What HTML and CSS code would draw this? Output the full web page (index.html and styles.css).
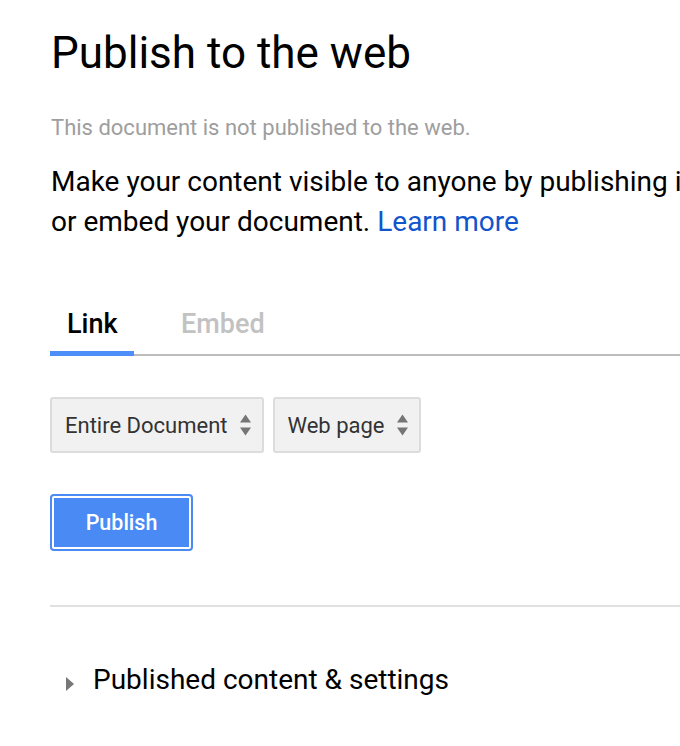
FILE: index.html
```html
<!DOCTYPE html>
<html>
<head>
<meta charset="utf-8">
<link rel="stylesheet" href="styles.css">
</head>
<body>
<div class="dialog">
  <h1 class="title">Publish to the web</h1>
  <p class="status">This document is not published to the web.</p>
  <p class="intro">Make your content visible to anyone by publishing it<br>or embed your document. <a class="link" href="#">Learn more</a></p>

  <div class="tabs">
    <div class="tab active">Link</div>
    <div class="tab">Embed</div>
  </div>

  <div class="selects">
    <div class="select">Entire Document <span class="arrows"><svg width="11" height="22" viewBox="0 0 11 22"><path d="M5.5 0.5 L11 8.5 H0 Z M0 13.5 H11 L5.5 21.5 Z" fill="#757575"/></svg></span></div>
    <div class="select">Web page <span class="arrows"><svg width="11" height="22" viewBox="0 0 11 22"><path d="M5.5 0.5 L11 8.5 H0 Z M0 13.5 H11 L5.5 21.5 Z" fill="#757575"/></svg></span></div>
  </div>

  <button class="publish">Publish</button>

  <div class="divider"></div>

  <div class="expander">
    <span class="caret"></span>
    <span class="expander-label">Published content &amp; settings</span>
  </div>
</div>
</body>
</html>
```

FILE: styles.css
```css
html, body {
  margin: 0;
  padding: 0;
  background: #fff;
  overflow: hidden;
}
body {
  font-family: Roboto, "Liberation Sans", Arial, sans-serif;
  color: #000;
}
.dialog {
  width: 700px;
  padding: 25px 0 0 50px;
}
.title {
  margin: 0;
  font-size: 44px;
  font-weight: 400;
  line-height: 56px;
  padding-left: 1px;
}
.status {
  margin: 35px 0 0 1px;
  font-size: 22px;
  color: #9e9e9e;
  line-height: 24px;
}
.intro {
  margin: 22px 0 0 1px;
  font-size: 28px;
  line-height: 40px;
  white-space: nowrap;
}
.link {
  color: #1155cc;
  text-decoration: none;
}
.tabs {
  display: flex;
  align-items: flex-start;
  margin-top: 66px;
  border-bottom: 2px solid #bdbdbd;
}
.tab {
  font-size: 27px;
  font-weight: 500;
  line-height: 32px;
  color: #c2c2c2;
  padding: 0 17px 16px;
  margin-bottom: -2px;
}
.tab.active {
  color: #000;
  width: 84px;
  box-sizing: border-box;
  padding-bottom: 11px;
  border-bottom: 5px solid #4d8ef8;
  margin-right: 30px;
}
.selects {
  display: flex;
  gap: 9px;
  margin-top: 41px;
}
.select {
  display: flex;
  align-items: center;
  height: 56px;
  box-sizing: border-box;
  padding: 0 11px 0 13px;
  background: #f1f1f1;
  border: 2px solid #dcdcdc;
  border-radius: 3px;
  font-size: 22px;
  color: #333;
}
.arrows {
  display: flex;
  margin-left: 12px;
}
.publish {
  display: block;
  margin: 43px 0 0 2px;
  width: 139px;
  height: 53px;
  padding: 0;
  background: #4a8af4;
  color: #fff;
  font-family: inherit;
  font-size: 21.5px;
  font-weight: 500;
  border: 2px solid #fff;
  border-radius: 2px;
  box-shadow: 0 0 0 2px #4a8af4;
  box-sizing: border-box;
}
.divider {
  margin-top: 56px;
  height: 2px;
  background: #e0e0e0;
}
.expander {
  display: flex;
  align-items: flex-start;
  margin-top: 57px;
  padding-left: 16px;
}
.caret {
  width: 0;
  height: 0;
  margin-top: 13px;
  border-top: 7px solid transparent;
  border-bottom: 7px solid transparent;
  border-left: 8px solid #777;
}
.expander-label {
  font-size: 28px;
  margin-left: 19px;
  line-height: 32px;
}
```
